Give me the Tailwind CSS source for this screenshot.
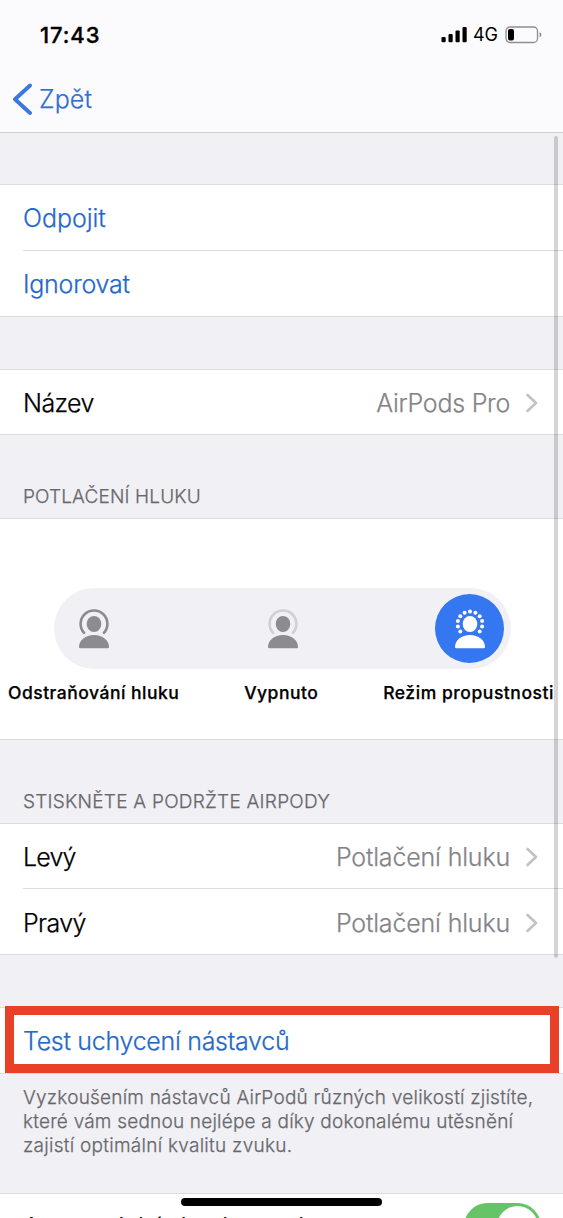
<!DOCTYPE html>
<html lang="cs">
<head>
<meta charset="utf-8">
<title>AirPods Pro</title>
<script src="https://cdn.jsdelivr.net/npm/@tailwindcss/browser@4"></script>
</head>
<body class="bg-[#f0f0f5]">
<svg class="hidden">
  <symbol id="person" viewBox="0 0 32 40">
    <ellipse cx="16" cy="15" rx="7.300" ry="8"/>
    <path d="M1 37.900C1 31.200 7.500 26 16 26S31 31.200 31 37.900Q31 39.200 29.700 39.200H2.300Q1 39.200 1 37.900Z"/>
  </symbol>
  <symbol id="arc" viewBox="0 0 32 40">
    <path d="M6.100 23.900A13.400 13.400 0 1 1 25.900 23.900" fill="none" stroke="currentColor" stroke-width="2.600" stroke-linecap="round"/>
  </symbol>
  <symbol id="chev" viewBox="0 0 14 20">
    <path d="M2.500 2L11 10L2.500 18" fill="none" stroke="#c2c2c6" stroke-width="2.600" stroke-linecap="round" stroke-linejoin="round"/>
  </symbol>
</svg>
<div class="relative flex h-[1218px] w-[563px] flex-col overflow-hidden bg-[#f0f0f5] text-[25px] font-light leading-[30px] whitespace-nowrap text-black [-webkit-text-stroke:0.25px_currentColor]" style="font-family:Inter,'Liberation Sans',sans-serif">
  <header class="h-[133px] shrink-0 border-b border-[#d0d0d4] bg-[#fbfbfd]">
    <div class="flex h-[69px] items-center justify-between pr-[21px] pl-[40px]">
      <span class="text-[22px] font-medium tracking-[0.9px] [-webkit-text-stroke:0.35px_currentColor]">17:43</span>
      <div class="flex items-center">
        <svg class="h-[17px] w-[27px]" viewBox="0 0 27 17"><rect x="1.500" y="11" width="4.200" height="5.300" rx="1"/><rect x="8.500" y="8" width="4.200" height="8.300" rx="1"/><rect x="15.500" y="4.500" width="4.200" height="11.800" rx="1"/><rect x="22.500" y="1" width="4.200" height="15.300" rx="1"/></svg>
        <span class="ml-[6px] text-[18px] font-normal [-webkit-text-stroke:0px]">4G</span>
        <svg class="ml-[7px] h-[18px] w-[37px]" viewBox="0 0 37 18"><rect x="1" y="1" width="31.500" height="15.500" rx="4" fill="none" stroke="#8e8e92" stroke-width="1.300"/><rect x="3" y="3" width="6" height="11.500" rx="2"/><path d="M34.500 6.300Q36.500 7 36.500 8.800T34.500 11.300Z" fill="#8e8e92"/></svg>
      </div>
    </div>
    <div class="flex h-[60px] items-center pl-[12px] text-[#2f6fd0]">
      <svg class="h-[32px] w-[21px]" viewBox="0 0 21 32"><path d="M18 2.500L3 16.200L18 30" fill="none" stroke="#3a78e0" stroke-width="3.900" stroke-linecap="round" stroke-linejoin="round"/></svg>
      <span class="ml-[6px] tracking-[0.1px]">Zpět</span>
    </div>
  </header>

  <section class="mt-[51px] h-[133px] shrink-0 border-y border-[#dcdbe0] bg-white pl-[23px] text-[#2569c9]">
    <div class="flex h-[66px] items-center border-b border-[#dcdbe0]"><span class="tracking-[-0.05px]">Odpojit</span></div>
    <div class="flex h-[65px] items-center"><span class="tracking-[-0.25px]">Ignorovat</span></div>
  </section>

  <section class="mt-[52px] flex h-[66px] shrink-0 items-center border-y border-[#dcdbe0] bg-white pt-px pr-[24px] pl-[23px]">
    <span class="tracking-[-0.6px]">Název</span>
    <span class="ml-auto tracking-[-0.25px] text-[#848488]">AirPods Pro</span>
    <svg class="ml-[15px] h-[20px] w-[14px]"><use href="#chev"/></svg>
  </section>

  <h2 class="mt-[47px] h-[30px] shrink-0 pl-[23px] text-[19px] tracking-[0.15px] text-[#68686d]">POTLAČENÍ HLUKU</h2>
  <section class="mt-[6px] h-[222px] shrink-0 border-y border-[#dcdbe0] bg-white pt-[69px]">
    <div class="ml-[54px] flex h-[81px] w-[457px] items-center justify-between rounded-full bg-[#f0f0f5] pr-[7px] pl-[24px] text-[#8b8b90]">
      <svg class="h-[40px] w-[32px] fill-current"><use href="#person"/><use href="#arc"/></svg>
      <svg class="ml-[20px] h-[40px] w-[32px] fill-current"><use href="#person"/><use href="#arc" class="text-[#d0d0d4]"/></svg>
      <div class="flex size-[69px] items-center justify-center rounded-full bg-[#3577f0]">
        <svg class="h-[40px] w-[32px] fill-white" viewBox="0 0 32 40"><use href="#person"/>
          <circle cx="6.300" cy="22.500" r="2"/><circle cx="3.900" cy="17.400" r="2"/><circle cx="3.900" cy="12" r="2"/><circle cx="6.300" cy="7.200" r="2"/><circle cx="10.600" cy="3.700" r="2"/><circle cx="16" cy="2.400" r="2"/><circle cx="21.400" cy="3.700" r="2"/><circle cx="25.700" cy="7.200" r="2"/><circle cx="28.100" cy="12" r="2"/><circle cx="28.100" cy="17.400" r="2"/><circle cx="25.700" cy="22.500" r="2"/></svg>
      </div>
    </div>
    <div class="flex h-[48px] items-center justify-between pr-[9px] pl-[8px] text-[17.500px] font-medium">
      <span class="tracking-[0.5px]">Odstraňování hluku</span>
      <span class="tracking-[0.5px]">Vypnuto</span>
      <span class="tracking-[0.55px]">Režim propustnosti</span>
    </div>
  </section>

  <h2 class="mt-[47px] h-[30px] shrink-0 pl-[23px] text-[19px] tracking-[0.25px] text-[#68686d]">STISKNĚTE A PODRŽTE AIRPODY</h2>
  <section class="mt-[6px] h-[132px] shrink-0 border-y border-[#dcdbe0] bg-white pl-[23px]">
    <div class="flex h-[65px] items-center border-b border-[#dcdbe0] pt-px pr-[24px]"><span class="tracking-[-0.8px]">Levý</span><span class="ml-auto tracking-[-0.17px] text-[#848488]">Potlačení hluku</span><svg class="ml-[15px] h-[20px] w-[14px]"><use href="#chev"/></svg></div>
    <div class="flex h-[65px] items-center pt-[2px] pr-[24px]"><span class="tracking-[-0.6px]">Pravý</span><span class="ml-auto tracking-[-0.17px] text-[#848488]">Potlačení hluku</span><svg class="ml-[15px] h-[20px] w-[14px]"><use href="#chev"/></svg></div>
  </section>

  <section class="relative mt-[52px] flex h-[67px] shrink-0 items-center border-y border-[#dcdbe0] bg-white pl-[23px] text-[#2569c9]">
    <span class="tracking-[-0.29px]">Test uchycení nástavců</span>
    <div class="absolute -top-[2px] left-[5px] h-[67px] w-[554px] border-[9px] border-[#e94128]"></div>
  </section>
  <p class="mt-[12px] h-[72px] shrink-0 pl-[23px] text-[19px] leading-[24px] text-[#68686d]"><span class="tracking-[0.22px]">Vyzkoušením nástavců AirPodů různých velikostí zjistíte,</span><br><span class="tracking-[0.2px]">které vám sednou nejlépe a díky dokonalému utěsnění</span><br><span class="tracking-[0.27px]">zajistí optimální kvalitu zvuku.</span></p>

  <section class="mt-[35px] flex h-[66px] shrink-0 items-center justify-between border-t border-[#dcdbe0] bg-white pr-[22px] pl-[23px]">
    <span class="pt-px tracking-[-0.15px]">Automatická detekce ucha</span>
    <div class="flex h-[47px] w-[77px] justify-end rounded-full bg-[#65c466] p-[3px]"><div class="size-[41px] rounded-full bg-white"></div></div>
  </section>

  <div class="absolute top-[136px] left-[554px] h-[822px] w-[4px] rounded-full bg-black/16"></div>
  <div class="absolute top-[1198px] left-[181px] h-[8px] w-[201px] rounded-full bg-black"></div>
</div>
</body>
</html>
